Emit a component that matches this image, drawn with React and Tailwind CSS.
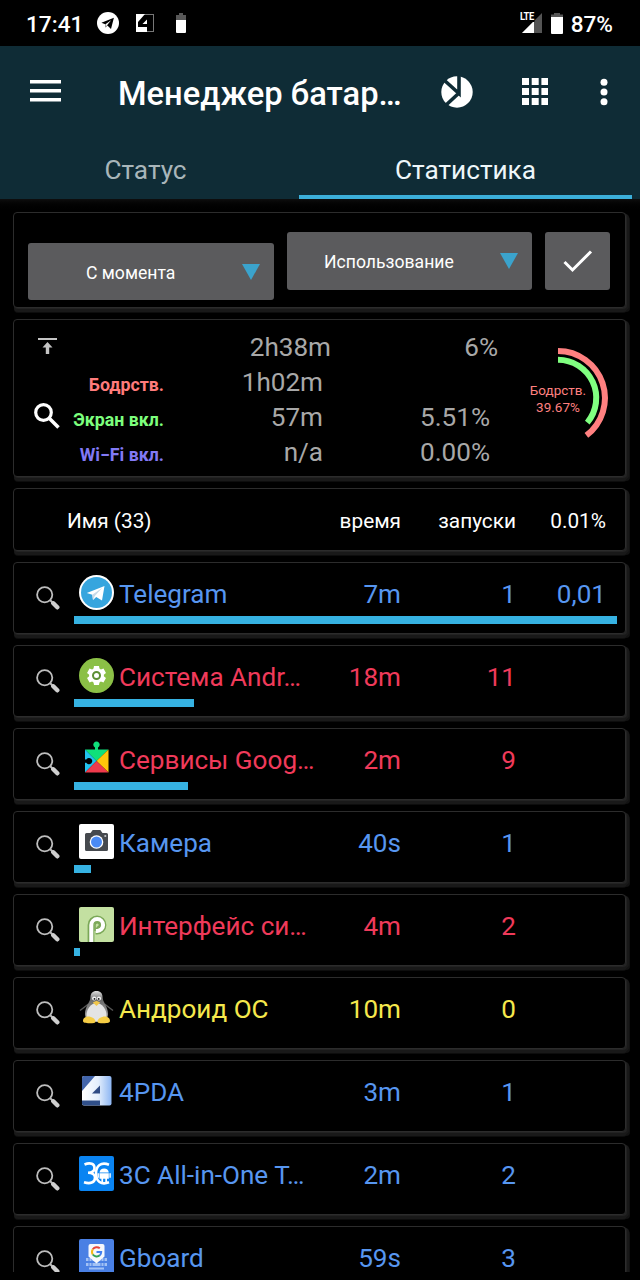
const APPS = [
  { id: 'telegram', name: 'Telegram', time: '7m', runs: '1', pct: '0,01', bar: 543, tone: 'blue' },
  { id: 'system', name: 'Система Andr…', time: '18m', runs: '11', bar: 120, tone: 'red' },
  { id: 'services', name: 'Сервисы Goog…', time: '2m', runs: '9', bar: 114, tone: 'red' },
  { id: 'camera', name: 'Камера', time: '40s', runs: '1', bar: 17, tone: 'blue' },
  { id: 'ui', name: 'Интерфейс си…', time: '4m', runs: '2', bar: 6, tone: 'red' },
  { id: 'os', name: 'Андроид ОС', time: '10m', runs: '0', bar: 0, tone: 'yellow' },
  { id: '4pda', name: '4PDA', time: '3m', runs: '1', bar: 0, tone: 'blue' },
  { id: '3c', name: '3C All-in-One T…', time: '2m', runs: '2', bar: 0, tone: 'blue' },
  { id: 'gboard', name: 'Gboard', time: '59s', runs: '3', bar: 0, tone: 'blue' },
]

const TONES = {
  blue: 'text-[#5796f0]',
  red: 'text-[#f03a5a]',
  yellow: 'text-[#f5e84c]',
}

const STATS = [
  { time: '2h38m', pct: '6%', wide: true },
  { label: 'Бодрств.', color: 'text-[#ff7b7b]', time: '1h02m', pct: '' },
  { label: 'Экран вкл.', color: 'text-[#7dff7d]', time: '57m', pct: '5.51%' },
  { label: 'Wi−Fi вкл.', color: 'text-[#8279f5]', time: 'n/a', pct: '0.00%' },
]

function StatusBar() {
  return (
    <div className="flex h-[46px] items-center bg-black pl-[26px] pr-[26px] text-[22.6px] font-medium leading-[46px] text-white">
      <span className="w-[71px] pt-[3px]">17:41</span>
      <svg viewBox="0 0 22 22" className="h-[22px] w-[22px]">
        <circle cx="11" cy="11" r="11" fill="#fff" />
        <path d="M4.4 10.8 16.9 5.8 14 17 10.4 13.6 8.4 15.4 8.2 12.3Z" fill="#000" />
        <path d="m8.4 12.2 5.7-3.9-3.8 4.6-1.7 2z" fill="#fff" />
      </svg>
      <svg viewBox="0 0 18 18" className="ml-[17px] h-[18px] w-[18px]">
        <rect x=".5" y=".5" width="17" height="17" fill="#000" stroke="#777" />
        <path d="M0 0h9L2 8v5h9v5H0z" fill="#fff" />
        <path d="M11 5.500v4.500H6.500z" fill="#fff" />
      </svg>
      <svg viewBox="0 0 10 20" className="ml-[22px] h-5 w-2.5">
        <path d="M3 0h4v2h3v5H0V2h3z" fill="#585858" />
        <path d="M0 7h10v12a1 1 0 0 1-1 1H1a1 1 0 0 1-1-1z" fill="#fff" />
      </svg>
      <div className="relative ml-auto h-5 w-[24px]">
        <svg viewBox="0 0 20 20" className="absolute left-[3px] top-0 h-5 w-5">
          <path d="M20 0v20H0z" fill="#555" />
          <path d="M12 8v12H0z" fill="#fff" />
        </svg>
        <span className="absolute left-px top-[-1px] origin-left scale-x-85 bg-black pr-px text-[11px] font-bold leading-[10px] tracking-[-0.5px]">LTE</span>
      </div>
      <svg viewBox="0 0 12 21" className="ml-2 h-[21px] w-3">
        <path d="M3 0h6v1.500h3V5H0V1.500h3z" fill="#555" />
        <path d="M0 4h12v16a1 1 0 0 1-1 1H1a1 1 0 0 1-1-1z" fill="#fff" />
      </svg>
      <span className="ml-2 pr-px pt-[3px]">87%</span>
    </div>
  )
}

function Header() {
  return (
    <header className="h-[153px] bg-[#0f2c36] text-white">
      <div className="flex h-[91px] items-center pl-[30px]">
        <svg viewBox="0 0 31 22" className="mb-px h-[22px] w-[31px]" fill="#fff">
          <path d="M0 0h31v3.500H0zM0 9h31v3.500H0zM0 18h31v3.500H0z" />
        </svg>
        <h1 className="ml-[57px] w-[323px] whitespace-nowrap pt-[4px] text-[32.7px] font-medium leading-10">
          Менеджер батар…
        </h1>
        <svg viewBox="0 0 32 32" className="h-8 w-8 shrink-0">
          <circle cx="16" cy="16" r="15.700" fill="#fff" />
          <path d="M18 0v17.500L3 4M18 17 4 30" fill="none" stroke="#0f2c36" strokeWidth="3.600" />
        </svg>
        <svg viewBox="0 0 26 27" className="ml-[49px] h-[27px] w-[26px] shrink-0" fill="#fff">
          <path d="M0 0h7v7H0zM9.700 0h7v7h-7zM19.400 0h7v7h-7zM0 10h7v7H0zM9.700 10h7v7h-7zM19.400 10h7v7h-7zM0 20h7v7H0zM9.700 20h7v7h-7zM19.400 20h7v7h-7z" />
        </svg>
        <svg viewBox="0 0 8 28" className="ml-[52px] h-7 w-2 shrink-0" fill="#fff">
          <circle cx="4" cy="4.300" r="3.500" />
          <circle cx="4" cy="14" r="3.500" />
          <circle cx="4" cy="23.700" r="3.500" />
        </svg>
      </div>
      <nav className="flex h-[62px] pr-2 text-center text-[26.2px] leading-[66px]">
        <div className="w-[299px] pr-2 text-[#a9b6ba]">Статус</div>
        <div className="flex-1 border-b-4 border-[#3bafda] text-[#eef7fa]">Статистика</div>
      </nav>
    </header>
  )
}

function Card({ className, children }) {
  return (
    <section
      className={`ml-[13px] w-[613px] shrink-0 rounded-[4px] border border-[#2c2c2c] bg-black shadow-[1px_1px_0_#232323,3px_2px_0_#191919,1px_4px_0_#191919,4px_4px_0_#121212,1px_5px_0_#0d0d0d] ${className}`}
    >
      {children}
    </section>
  )
}

function Triangle() {
  return (
    <svg viewBox="0 0 18 16" className="h-4 w-[18px]">
      <path d="M0 0h18L9 16z" fill="#3ba3cc" />
    </svg>
  )
}

function Filters() {
  return (
    <Card className="flex h-24 pl-[14px] text-[17.6px] leading-6 text-white">
      <div className="mt-[30px] flex h-[57px] w-[246px] items-center justify-between rounded-[3px] bg-[#5b5b5d] pl-[58px] pr-[14px]">
        <span className="pt-[3px]">С момента</span>
        <Triangle />
      </div>
      <div className="ml-[13px] mt-[19px] flex h-[58px] w-[245px] items-center justify-between rounded-[3px] bg-[#5b5b5d] pl-[37px] pr-[14px]">
        <span className="pt-[2px]">Использование</span>
        <Triangle />
      </div>
      <div className="ml-[13px] mt-[19px] flex h-[58px] w-[65px] items-center justify-center rounded-[3px] bg-[#5b5b5d]">
        <svg viewBox="0 0 30 24" className="h-6 w-[30px]">
          <path d="m1.500 13 8 8L28 2.500" fill="none" stroke="#fff" strokeWidth="3" />
        </svg>
      </div>
    </Card>
  )
}

function Gauge() {
  return (
    <div className="relative h-[100px] w-[100px] text-center text-[13.5px] leading-[17px] text-[#ff8080]">
      <svg viewBox="0 0 100 100" className="absolute inset-0" fill="none" strokeWidth="6">
        <path d="M50 3A47 47 0 0 1 78.400 87.400" stroke="#ff8080" />
        <path d="M50 11.700A38.300 38.300 0 0 1 79.300 74.600" stroke="#80ff80" />
      </svg>
      <div className="relative pt-[34px]">Бодрств.</div>
      <div>39.67%</div>
    </div>
  )
}

function Summary() {
  return (
    <Card className="flex h-[158px] text-[26.1px] text-[#a8a8a8]">
      <div className="flex w-[38px] flex-col items-end pt-[18px]">
        <svg viewBox="0 0 19 16" className="mr-[-5px] h-4 w-[19px]" fill="#c4c4c4">
          <path d="M0 0h19v2H0zM9.500 4l5 5.500h-3.300V16H7.800V9.500H4.500z" />
        </svg>
        <svg viewBox="0 0 26 26" className="mr-[-8px] mt-[49px] h-[26px] w-[26px]" fill="none" stroke="#fff">
          <circle cx="9.500" cy="9.500" r="7.800" strokeWidth="3.200" />
          <path d="m15.500 15.500 9 9" strokeWidth="3.600" />
        </svg>
      </div>
      <div className="w-[478px] pt-[10px]">
        {STATS.map(s => (
          <div key={s.time} className="flex h-[35px] leading-[35px]">
            <span className={`w-[112px] whitespace-nowrap pt-[2px] text-right text-[17.8px] font-bold ${s.color || ''}`}>{s.label}</span>
            <span className={`text-right ${s.wide ? 'w-[167px]' : 'w-[159px]'}`}>{s.time}</span>
            <span className="w-[167px] text-right">{s.pct}</span>
          </div>
        ))}
      </div>
      <div className="ml-[-22px] pt-7">
        <Gauge />
      </div>
    </Card>
  )
}

function RowSearch() {
  return (
    <svg viewBox="0 0 24 24" className="h-6 w-6" fill="none">
      <circle cx="8.700" cy="8.700" r="7.600" stroke="#bdbdbd" strokeWidth="1.800" />
      <path d="m14 14 3 3" stroke="#bdbdbd" strokeWidth="2" />
      <path d="m17.300 17.300 4 4" stroke="#cfcfcf" strokeWidth="4.400" strokeLinecap="round" />
    </svg>
  )
}

function AppIcon({ id }) {
  return (
    <svg viewBox="0 0 35 35" className="h-[35px] w-[35px] shrink-0">
      {id === 'telegram' && (
        <>
          <circle cx="17.500" cy="17.500" r="17.500" fill="#fff" />
          <circle cx="17.500" cy="17.500" r="15.500" fill="#36a5de" />
          <path d="M7.800 18 25.500 11 23 25.500 17.200 22 14 25 13.300 19.800Z" fill="#fff" />
          <path d="m13.300 19.800 10-7-7.500 8.300L14 25z" fill="#c8dae8" />
        </>
      )}
      {id === 'system' && (
        <>
          <circle cx="17.500" cy="17.500" r="17.500" fill="#8bc046" />
          <g fill="#fff">
            <circle cx="17.500" cy="17.500" r="7.400" />
            <path d="M15 8h5l.7 4h-6.400zM15 27h5l.7-4h-6.400z" />
            <path d="M15 8h5l.7 4h-6.400zM15 27h5l.7-4h-6.400z" transform="rotate(60 17.500 17.500)" />
            <path d="M15 8h5l.7 4h-6.400zM15 27h5l.7-4h-6.400z" transform="rotate(120 17.500 17.500)" />
          </g>
          <circle cx="17.500" cy="17.500" r="3.500" fill="#fff" stroke="#5d8f35" strokeWidth="2" />
        </>
      )}
      {id === 'services' && (
        <>
          <path d="M6 8.500h23.500L17.500 20z" fill="#0fe07a" />
          <path d="M16 10V6.500a3.200 3.200 0 1 1 3 0V10z" fill="#0fe07a" />
          <path d="M6 8.500 17.500 20 6 31.500z" fill="#22c3ee" />
          <path d="M29.500 8.500v23L17.500 20z" fill="#ffc60a" />
          <path d="M6 31.500 17.500 20l12 11.500z" fill="#ef3a4c" />
          <path d="M5.500 18.500h1.800a3.200 3.200 0 1 1 0 3.200H5.500z" fill="#000" />
        </>
      )}
      {id === 'camera' && (
        <>
          <rect width="35" height="35" rx="2" fill="#fff" />
          <path d="M7.500 9h4l2.200-3h7.600l2.200 3h4A1.500 1.500 0 0 1 29 10.500v15A1.500 1.500 0 0 1 27.500 27h-20A1.500 1.500 0 0 1 6 25.500v-15A1.500 1.500 0 0 1 7.500 9z" fill="#45494e" />
          <circle cx="17.500" cy="18" r="6.800" fill="#fff" />
          <circle cx="17.500" cy="18" r="5.500" fill="#4a8af4" />
          <circle cx="26.300" cy="12" r="1.100" fill="#c3c6c9" />
        </>
      )}
      {id === 'ui' && (
        <>
          <rect width="35" height="35" rx="2" fill="#c3e0a1" />
          <path d="M12 35V18a6 6 0 1 1 6 6h-1.500" fill="none" stroke="#7aa757" strokeWidth="6.800" />
          <path d="M12.300 35V18a5.900 5.900 0 1 1 5.900 5.900h-1.500" fill="none" stroke="#fff" strokeWidth="4" />
          <path d="M16 24V18a2.200 2.200 0 1 1 2 2.200" fill="none" stroke="#7aa757" strokeWidth="1.500" />
        </>
      )}
      {id === 'os' && (
        <>
          <defs>
            <linearGradient id="tux" x1="0" x2="0" y1="0" y2="1">
              <stop offset="0" stopColor="#e0e0e0" />
              <stop offset=".3" stopColor="#6a6a6a" />
              <stop offset="1" stopColor="#b0b0b0" />
            </linearGradient>
          </defs>
          <path d="m9.500 14-8.500 6.500M25.500 14l8.500 6.500" stroke="#555" strokeWidth="1.500" />
          <path d="M17.500 1c-4 0-6 2.600-6 6 0 5-5.500 9-5.500 17 0 5 4 8 11.500 8S29 29 29 24c0-8-5.500-12-5.500-17 0-3.400-2-6-6-6z" fill="url(#tux)" />
          <path d="M17.500 13c-6 0-10 7-10 12 0 4 4 6 10 6s10-2 10-6c0-5-4-12-10-12z" fill="#e4e4e4" />
          <circle cx="15.200" cy="8.500" r="2.100" fill="#f4f4f4" />
          <circle cx="20" cy="8.500" r="2.100" fill="#f4f4f4" />
          <circle cx="15.500" cy="8.900" r=".9" fill="#111" />
          <circle cx="19.700" cy="8.900" r=".9" fill="#111" />
          <path d="m13.800 12.500 3.700-1.800 3.700 1.800-3.700 3.500z" fill="#f0c64a" />
          <path d="M4 31c0-3 2.500-4.500 5-4.500 4 0 7.500 2.500 7.500 5 0 1.500-2 1.700-6 1.700S4 32.700 4 31zM31 31c0-3-2.500-4.500-5-4.500-4 0-7.500 2.500-7.500 5 0 1.500 2 1.700 6 1.700s6.500-.5 6.500-2.200z" fill="#f6cd45" />
        </>
      )}
      {id === '4pda' && (
        <>
          <defs>
            <linearGradient id="pda" x1="0" x2="1">
              <stop offset="0" stopColor="#fff" />
              <stop offset=".55" stopColor="#e3eefc" />
              <stop offset="1" stopColor="#8db6f3" />
            </linearGradient>
          </defs>
          <rect x="3" y="3" width="29.500" height="29.500" rx="2" fill="url(#pda)" />
          <path d="M5 3h11L3 18V5a2 2 0 0 1 2-2z" fill="#4265ab" />
          <path d="M21 12.500v8h-8z" fill="#2f4b84" />
          <path d="M3 27.500h18v5H5a2 2 0 0 1-2-2z" fill="#304f89" />
        </>
      )}
      {id === '3c' && (
        <>
          <rect width="35" height="35" rx="2" fill="#0a84f2" />
          <g fill="none" stroke="#fff" strokeWidth="2.600">
            <path d="M5.500 8.500c6-2.500 10-.5 10 3.500 0 3-2.500 4.700-6.500 4.700 4 0 7 2 7 5 0 5-5 6.500-11 4.500" />
            <path d="M30 8.700c-8-3-13 1-13 8.800s5 11.800 13 8.800" />
          </g>
          <path d="M20.500 16.500a4.700 4.700 0 0 1 9.300 0zM20.500 17.200h9.300v5.500h-1.800V26h-1.700v-3.300h-2.200V26h-1.700v-3.300h-1.900zM18.500 17.200h1.400v4.500h-1.400zM30.400 17.200h1.400v4.500h-1.400z" fill="#fff" />
        </>
      )}
      {id === 'gboard' && (
        <>
          <path d="M2 0h31a2 2 0 0 1 2 2v33H0V2a2 2 0 0 1 2-2z" fill="#4a80e4" />
          <path d="M7 19h21v3H7zM7 24h21v3H7zM10 28.500h15v2H10z" fill="#a3c2f5" />
          <path d="M10 19v8M13 19v8M22 19v8M25 19v8M7 23h21" stroke="#4a80e4" />
          <path d="M11.500 5h12A2 2 0 0 1 25.500 7v10.500L17.500 24.500l-8-7V7a2 2 0 0 1 2-2z" fill="#f6f8fc" />
          <g fill="none" strokeWidth="2">
            <path d="M13.800 10.300a4.800 4.800 0 0 1 7-1" stroke="#e8453c" />
            <path d="M13.800 15.500a4.800 4.800 0 0 1 0-5.200" stroke="#f7ba16" />
            <path d="M20.800 16.300a4.800 4.800 0 0 1-7-.8" stroke="#34a253" />
            <path d="M17.500 13h4.700a4.800 4.800 0 0 1-1.400 3.300" stroke="#4380ef" />
          </g>
        </>
      )}
    </svg>
  )
}

function AppRow({ app }) {
  return (
    <Card className="flex h-[72px]">
      <div className="w-[60px] pl-[22px] pt-[23px]">
        <RowSearch />
      </div>
      <div className="w-[543px]">
        <div className={`flex h-[53px] whitespace-nowrap pl-[5px] pt-3 text-[26.1px] ${TONES[app.tone]}`}>
          <AppIcon id={app.id} />
          <div className="mt-px flex pl-[5px] leading-9">
            <span className="w-[200px]">{app.name}</span>
            <span className="w-[82px] text-right">{app.time}</span>
            <span className="w-[115px] text-right">{app.runs}</span>
            <span className="w-[90px] text-right">{app.pct}</span>
          </div>
        </div>
        <div className="h-2 bg-[#36b2e2]" style={{ width: app.bar }} />
      </div>
    </Card>
  )
}

export default function App() {
  return (
    <div className="flex h-[1280px] w-[640px] flex-col overflow-hidden bg-black font-['Roboto',sans-serif]">
      <StatusBar />
      <Header />
      <main className="flex h-[1073px] flex-col gap-[11px] overflow-hidden bg-linear-to-b from-[#0e0e0e] to-black to-[13px] pt-[13px]">
        <Filters />
        <Summary />
        <Card className="flex h-[63px] pl-[53px] text-[20.8px] leading-[64px] text-white">
          <span className="w-[150px]">Имя (33)</span>
          <span className="w-[184px] text-right">время</span>
          <span className="w-[115px] text-right">запуски</span>
          <span className="w-[90px] text-right">0.01%</span>
        </Card>
        {APPS.map(app => (
          <AppRow key={app.id} app={app} />
        ))}
      </main>
    </div>
  )
}
